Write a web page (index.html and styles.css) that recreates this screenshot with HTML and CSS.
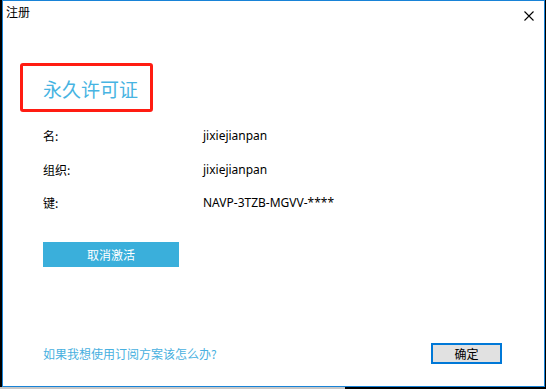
FILE: index.html
```html
<!DOCTYPE html>
<html lang="zh">
<head>
<meta charset="utf-8">
<link rel="stylesheet" href="styles.css">
</head>
<body>
<div class="window">
  <div class="titlebar">
    <span class="title">注册</span>
    <svg class="close" width="10" height="10" viewBox="0 0 10 10"><path d="M0.5 0.5 L9.5 9.5 M9.5 0.5 L0.5 9.5" stroke="#000" stroke-width="1.1" fill="none"/></svg>
  </div>
  <div class="content">
    <div class="license-box">永久许可证</div>
    <div class="info">
      <div class="row"><span class="label">名:</span><span class="value">jixiejianpan</span></div>
      <div class="row"><span class="label">组织:</span><span class="value">jixiejianpan</span></div>
      <div class="row"><span class="label">键:</span><span class="value">NAVP-3TZB-MGVV-****</span></div>
    </div>
    <div class="deactivate">取消激活</div>
    <div class="footer">
      <span class="link">如果我想使用订阅方案该怎么办?</span>
      <span class="ok">确定</span>
    </div>
  </div>
</div>
<div class="shadow"></div>
</body>
</html>
```
FILE: styles.css
```css
html, body {
  margin: 0;
  padding: 0;
  background: #000;
  width: 546px;
  height: 389px;
  overflow: hidden;
  font-family: "Noto Sans CJK SC", "Noto Sans", sans-serif;
  font-size: 12px;
  color: #000;
}
.window {
  margin-left: 2px;
  width: 543px;
  height: 387px;
  box-sizing: border-box;
  border: 1px solid #1883d7;
  background: #fff;
  display: flex;
  flex-direction: column;
}
.titlebar {
  height: 30px;
  display: flex;
  align-items: flex-start;
  justify-content: space-between;
  padding: 3px 10px 0 3px;
}
.title {
  font-size: 12px;
  line-height: 16px;
}
.close {
  margin-top: 7px;
}
.content {
  flex: 1;
  display: flex;
  flex-direction: column;
  padding: 0 0 0 17px;
}
.license-box {
  margin-top: 29px;
  width: 133px;
  height: 49px;
  box-sizing: border-box;
  border: 3px solid #ff1c12;
  border-radius: 3px;
  color: #47b4e2;
  font-size: 19px;
  line-height: 20px;
  padding: 13px 0 0 20px;
}
.info {
  margin-top: 15px;
  padding-left: 23px;
  display: flex;
  flex-direction: column;
}
.row {
  height: 33.5px;
  line-height: 18px;
  display: flex;
}
.label {
  width: 160px;
}
.value {
  font-family: "Noto Sans", sans-serif;
}
.deactivate {
  margin-top: 14px;
  margin-left: 23px;
  width: 136px;
  height: 25px;
  background: #3aafdb;
  color: #fff;
  text-align: center;
  line-height: 25px;
}
.footer {
  margin-top: 76px;
  display: flex;
  justify-content: space-between;
  align-items: center;
  padding-left: 23px;
  padding-right: 42px;
}
.link {
  color: #48b0e0;
}
.ok {
  width: 71px;
  height: 21px;
  box-sizing: border-box;
  border: 2px solid #0078d7;
  background: #e1e1e1;
  text-align: center;
  line-height: 17px;
}
.shadow {
  width: 345px;
  height: 2px;
  background: #c8c8c8;
}
```
